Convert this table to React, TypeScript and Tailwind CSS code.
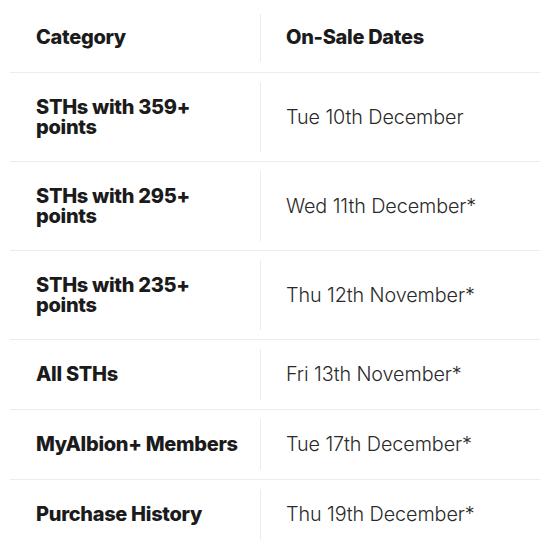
import React from "react";

const rows: [string, string][] = [
  ["STHs with 359+ points", "Tue 10th December"],
  ["STHs with 295+ points", "Wed 11th December*"],
  ["STHs with 235+ points", "Thu 12th November*"],
  ["All STHs", "Fri 13th November*"],
  ["MyAlbion+ Members", "Tue 17th December*"],
  ["Purchase History", "Thu 19th December*"],
];

export default function App() {
  return (
    <div className="w-[540px] h-[545px] overflow-hidden bg-white pl-[10px] font-['Inter',sans-serif]">
      <div className="flex h-[73px] border-b border-[#ececec]">
        <div className="w-[250px] pl-[26px] pt-[27px] text-[20px] leading-[20px] font-extrabold tracking-[-0.3px] text-[#1b1b1b]">
          Category
        </div>
        <div className="flex-1 flex">
          <div className="w-px bg-[#ececec] mt-[14px] mb-[10px]" />
          <div className="pl-[25px] pt-[27px] text-[20px] leading-[20px] font-extrabold tracking-[-0.3px] text-[#1b1b1b]">
            On-Sale Dates
          </div>
        </div>
      </div>
      {rows.map(([cat, date]) => (
        <div key={cat} className="flex border-b border-[#ececec]">
          <div className="w-[250px] pl-[26px] pr-[20px] py-[24px] text-[20px] leading-[20px] font-extrabold tracking-[-0.3px] text-[#1b1b1b]">
            {cat}
          </div>
          <div className="flex-1 flex">
            <div className="w-px bg-[#ececec] my-[9px]" />
            <div className="flex items-center pl-[25px] py-[24px] text-[19.8px] leading-[21px] font-light tracking-[-0.1px] text-[#2a2a2a]">
              {date}
            </div>
          </div>
        </div>
      ))}
    </div>
  );
}
